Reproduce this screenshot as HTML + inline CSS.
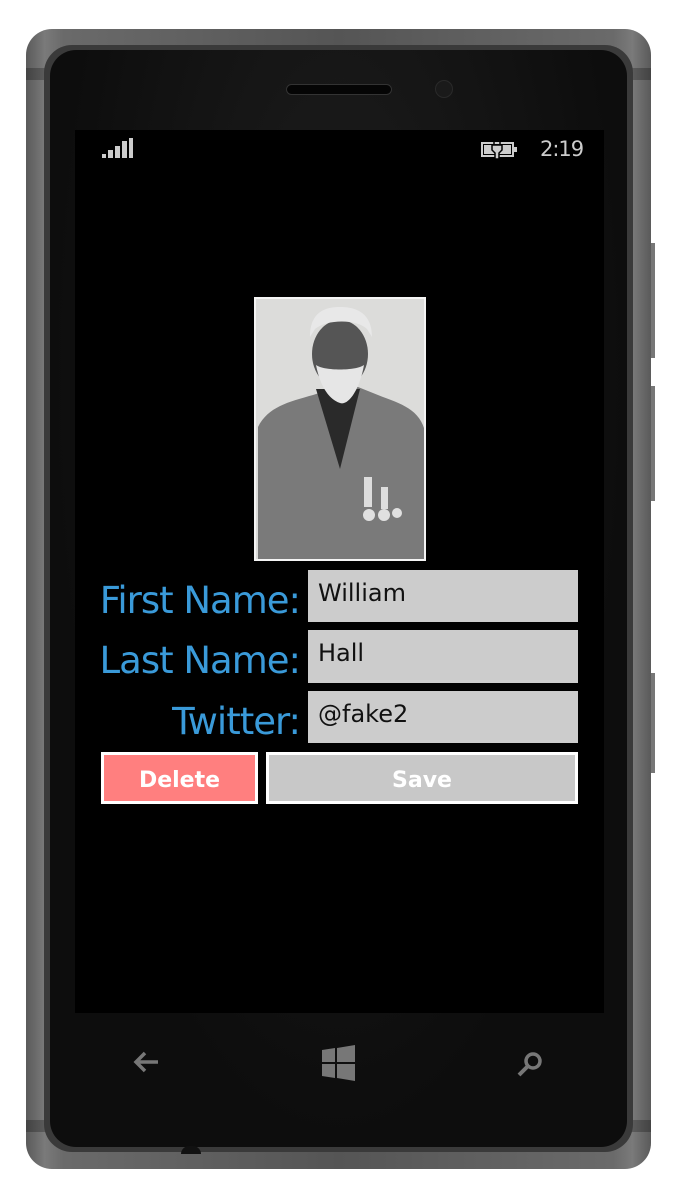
<!DOCTYPE html>
<html><head><meta charset="utf-8"><style>
*{margin:0;padding:0;box-sizing:border-box}
body{width:675px;height:1200px;background:#fff;position:relative;overflow:hidden;font-family:"Liberation Sans",sans-serif}
.abs{position:absolute}
.outer{left:26px;top:29px;width:625px;height:1140px;border-radius:26px;background:linear-gradient(90deg,#5a5a5a,#7a7a7a 3%,#6a6a6a 6%,#555 50%,#6a6a6a 94%,#7a7a7a 97%,#5a5a5a)}
.inner{left:44px;top:45px;width:589px;height:1107px;border-radius:28px;background:#3a3a3a}
.face{left:50px;top:50px;width:577px;height:1097px;border-radius:26px;background:radial-gradient(ellipse at 50% 30%,#1e1e1e,#0d0d0d 70%)}
.screen{left:75px;top:130px;width:529px;height:883px;background:#000}
.lbl{color:#3a9ad9;text-align:right;width:220px;left:80px;line-height:1;font-family:"DejaVu Sans","Liberation Sans",sans-serif;letter-spacing:-1px;font-size:37px}
.box{left:308px;width:270px;height:52px;background:#cccccc;color:#111;font-size:24px;padding:9px 0 0 10px;font-family:"DejaVu Sans",sans-serif}
.btn{height:52px;border:3px solid #fff;color:#fff;font-weight:bold;font-size:22px;text-align:center;line-height:52px;font-family:"DejaVu Sans",sans-serif}
</style></head><body>
<div class="abs outer"></div>
<div class="abs" style="left:26px;top:68px;width:625px;height:12px;background:rgba(0,0,0,.25)"></div>
<div class="abs" style="left:26px;top:1120px;width:625px;height:12px;background:rgba(0,0,0,.25)"></div>
<div class="abs" style="left:651px;top:243px;width:4px;height:115px;background:#777"></div>
<div class="abs" style="left:651px;top:386px;width:4px;height:115px;background:#777"></div>
<div class="abs" style="left:651px;top:673px;width:4px;height:100px;background:#777"></div>
<div class="abs inner"></div>
<div class="abs face"></div>
<div class="abs" style="left:286px;top:84px;width:106px;height:11px;border-radius:6px;background:#050505;border:1px solid #333"></div>
<div class="abs" style="left:435px;top:80px;width:18px;height:18px;border-radius:50%;background:#1a1a1a;border:1px solid #2a2a2a"></div>
<div class="abs" style="left:181px;top:1146px;width:20px;height:8px;border-radius:8px 8px 0 0;background:#111"></div>
<div class="abs screen"></div>
<svg class="abs" style="left:100px;top:137px" width="36" height="24"><rect x="2" y="17" width="4" height="4" fill="#ccc"/><rect x="8" y="13" width="5" height="8" fill="#ccc"/><rect x="15" y="9" width="5" height="12" fill="#ccc"/><rect x="22" y="4" width="5" height="17" fill="#ccc"/><rect x="29" y="1" width="4" height="20" fill="#ccc"/></svg>
<svg class="abs" style="left:481px;top:138px" width="40" height="22"><rect x="1" y="5" width="31" height="13" fill="none" stroke="#ccc" stroke-width="2"/><rect x="3" y="7" width="27" height="9" fill="#ccc"/><rect x="33" y="9" width="3" height="5" fill="#ccc"/><path d="M13 2v5M19 2v5M11 7h10v5l-3 3v6h-4v-6l-3-3z" stroke="#000" stroke-width="1.5" fill="#ccc"/></svg>
<div class="abs" style="left:540px;top:137px;color:#ccc;font-size:21px;font-family:'DejaVu Sans',sans-serif;letter-spacing:-1px">2:19</div>
<svg class="abs" style="left:254px;top:297px" width="172" height="264" viewBox="0 0 172 264">
<rect width="172" height="264" fill="#dcdcda"/>
<path d="M4 264V130c10-20 30-25 55-32l25-8h20l25 10c22 8 40 15 43 40v124z" fill="#7a7a7a"/>
<path d="M62 92l24 80 20-80z" fill="#2a2a2a"/>
<ellipse cx="86" cy="57" rx="28" ry="34" fill="#555"/>
<path d="M56 40c0-25 15-30 30-30s32 5 32 30l-5-8c-10-10-40-10-52 0z" fill="#e8e8e8"/>
<path d="M62 68c5 25 15 35 24 38s20-15 24-38c-8 6-40 6-48 0z" fill="#e6e6e6"/>
<circle cx="115" cy="218" r="6" fill="#e0e0e0"/><circle cx="130" cy="218" r="6" fill="#e0e0e0"/><circle cx="143" cy="216" r="5" fill="#e0e0e0"/>
<rect x="110" y="180" width="8" height="30" fill="#ddd"/><rect x="127" y="190" width="7" height="22" fill="#ddd"/>
<rect x="1" y="1" width="170" height="262" fill="none" stroke="#f4f4f4" stroke-width="2"/>
</svg>
<div class="abs lbl" style="top:582px">First Name:</div>
<div class="abs lbl" style="top:642px">Last Name:</div>
<div class="abs lbl" style="top:703px">Twitter:</div>
<div class="abs box" style="top:570px">William</div>
<div class="abs box" style="top:630px;height:53px">Hall</div>
<div class="abs box" style="top:691px">@fake2</div>
<div class="abs btn" style="left:101px;top:752px;width:157px;background:#ff7f7f">Delete</div>
<div class="abs btn" style="left:266px;top:752px;width:312px;background:#c8c8c8">Save</div>
<svg class="abs" style="left:131px;top:1048px" width="30" height="28"><path d="M27 14H5M14 5l-9 9 9 9" stroke="#777" stroke-width="3.5" fill="none"/></svg>
<svg class="abs" style="left:320px;top:1045px" width="36" height="36"><path d="M2 5l13-2v14H2zM17 3l18-3v17H17zM2 19h13v14l-13-2zM17 19h18v17l-18-3z" fill="#777"/></svg>
<svg class="abs" style="left:515px;top:1050px" width="30" height="30"><circle cx="18" cy="11" r="7" stroke="#777" stroke-width="3.5" fill="none"/><path d="M13 16l-9 9" stroke="#777" stroke-width="4"/></svg>
</body></html>
